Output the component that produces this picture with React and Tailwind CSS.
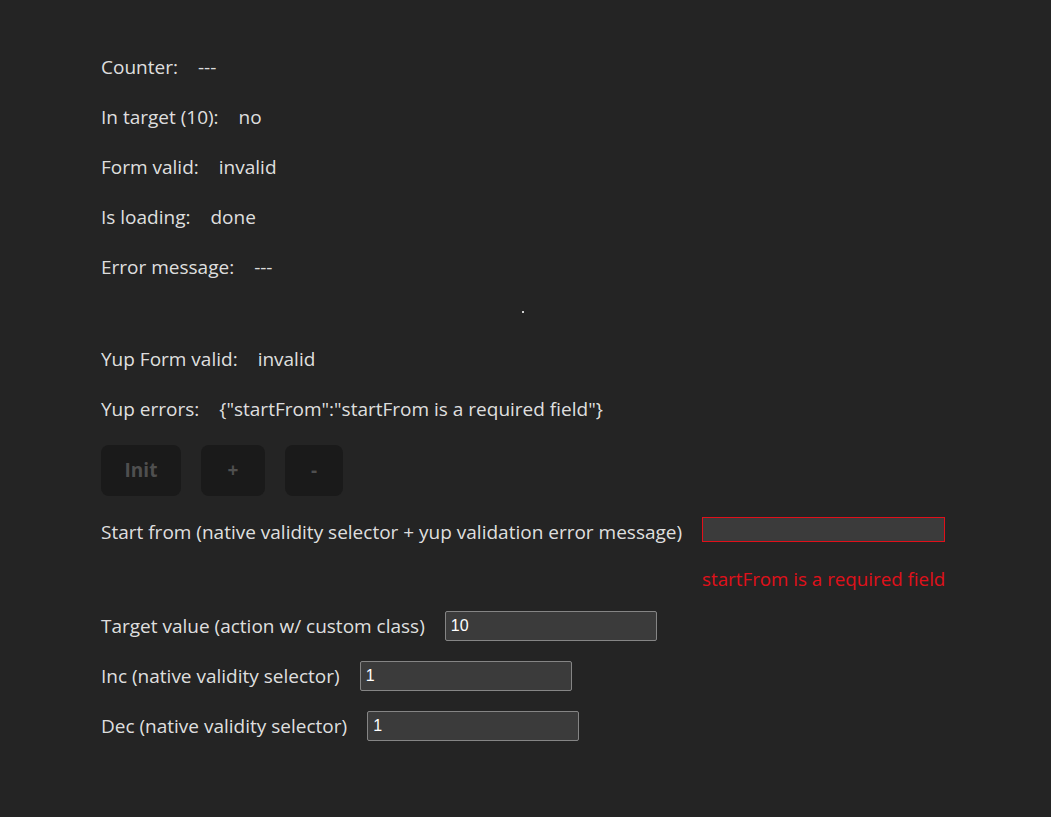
import React from 'react'

const font = { fontFamily: '"Open Sans", "Liberation Sans", sans-serif' }

const Stat = ({ label, value }) => (
  <div className="flex h-[27px] items-center gap-[20px]">
    <span>{label}</span>
    <span>{value}</span>
  </div>
)

const Field = ({ label, value, className = '' }) => (
  <div className="flex h-[30px] items-center gap-[20px]">
    <span>{label}</span>
    <input
      readOnly
      defaultValue={value}
      className={`h-[30px] w-[212px] rounded-[2px] border border-[#858585] bg-[#3b3b3b] px-[5px] text-[16px] text-white outline-none ${className}`}
      style={{ fontFamily: '"Liberation Sans", Arial, sans-serif' }}
    />
  </div>
)

const App = () => {
  return (
    <div className="min-h-[817px] w-full bg-[#242424] text-[19px] leading-[1.5] text-[rgba(255,255,255,0.87)]" style={font}>
      <div className="flex flex-col pl-[101px] pt-[54px]">
        <div className="flex flex-col gap-[23px]">
          <Stat label="Counter:" value="---" />
          <Stat label="In target (10):" value="no" />
          <Stat label="Form valid:" value="invalid" />
          <Stat label="Is loading:" value="done" />
          <Stat label="Error message:" value="---" />
        </div>

        <div className="mt-[30px] ml-[421px] h-[2px] w-[2px] bg-[#d0d0d0]" />

        <div className="mt-[33px] flex flex-col gap-[23px]">
          <Stat label="Yup Form valid:" value="invalid" />
          <Stat label="Yup errors:" value={'{"startFrom":"startFrom is a required field"}'} />
        </div>

        <div className="mt-[22px] flex gap-[20px]">
          <button disabled className="h-[51px] w-[80px] rounded-[8px] bg-[#1a1a1a] font-bold text-[#4f4f4f]">Init</button>
          <button disabled className="h-[51px] w-[64px] rounded-[8px] bg-[#1a1a1a] font-bold text-[#4f4f4f]">+</button>
          <button disabled className="h-[51px] w-[58px] rounded-[8px] bg-[#1a1a1a] font-bold text-[#4f4f4f]">-</button>
        </div>

        <div className="mt-[21px] flex items-start gap-[20px]">
          <span className="mt-[1px]">Start from (native validity selector + yup validation error message)</span>
          <div className="flex w-[243px] flex-col">
            <input
              readOnly
              className="h-[25px] w-[243px] border border-[#e0101a] bg-[#3b3b3b] outline-none"
            />
            <span className="mt-[23px] h-[27px] whitespace-nowrap text-right text-[18.75px] leading-[27px] text-[#e0101a]">startFrom is a required field</span>
          </div>
        </div>

        <div className="mt-[19px] flex flex-col gap-[20px]">
          <Field label="Target value (action w/ custom class)" value="10" />
          <Field label="Inc (native validity selector)" value="1" />
          <Field label="Dec (native validity selector)" value="1" />
        </div>
      </div>
    </div>
  )
}

export default App
